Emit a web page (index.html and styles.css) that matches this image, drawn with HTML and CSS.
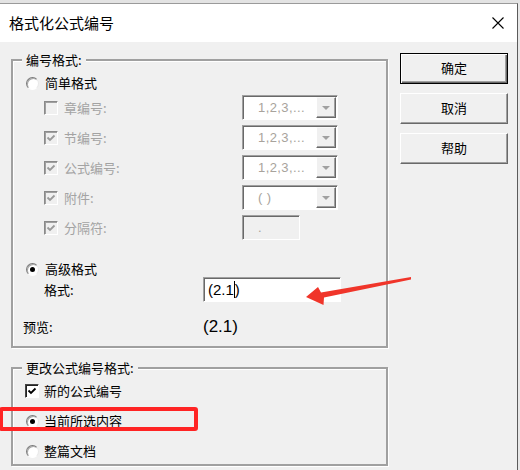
FILE: index.html
```html
<!DOCTYPE html>
<html lang="zh-CN">
<head>
<meta charset="utf-8">
<title>格式化公式编号</title>
<link rel="stylesheet" href="styles.css">
</head>
<body>
<div class="screen">
  <div class="chrome-top"></div>
  <div class="window">
    <div class="titlebar">
      <span class="title">格式化公式编号</span>
      <svg class="close" width="12" height="12" viewBox="0 0 12 12"><path d="M0.5 0.5L11.5 11.5M11.5 0.5L0.5 11.5" stroke="#000" stroke-width="1.1" fill="none"/></svg>
    </div>
    <div class="content">
      <div class="groups">
        <div class="group g1">
          <span class="legend">编号格式:</span>
          <div class="row r-simple"><span class="radio"></span><span>简单格式</span></div>
          <div class="opts">
            <div class="opt"><span class="cb"></span><span class="lbl">章编号:</span><div class="combo"><span class="ctext">1,2,3,...</span><span class="dd"><i class="tri"></i></span></div></div>
            <div class="opt"><span class="cb"><svg width="12" height="12" viewBox="0 0 12 12"><path d="M2.5 5.5L5 8L9.5 3.5" stroke="#9a9a9a" stroke-width="1.8" fill="none"/></svg></span><span class="lbl">节编号:</span><div class="combo"><span class="ctext">1,2,3,...</span><span class="dd"><i class="tri"></i></span></div></div>
            <div class="opt"><span class="cb"><svg width="12" height="12" viewBox="0 0 12 12"><path d="M2.5 5.5L5 8L9.5 3.5" stroke="#9a9a9a" stroke-width="1.8" fill="none"/></svg></span><span class="lbl">公式编号:</span><div class="combo"><span class="ctext">1,2,3,...</span><span class="dd"><i class="tri"></i></span></div></div>
            <div class="opt"><span class="cb"><svg width="12" height="12" viewBox="0 0 12 12"><path d="M2.5 5.5L5 8L9.5 3.5" stroke="#9a9a9a" stroke-width="1.8" fill="none"/></svg></span><span class="lbl">附件:</span><div class="combo"><span class="ctext">( )</span><span class="dd"><i class="tri"></i></span></div></div>
            <div class="opt"><span class="cb"><svg width="12" height="12" viewBox="0 0 12 12"><path d="M2.5 5.5L5 8L9.5 3.5" stroke="#9a9a9a" stroke-width="1.8" fill="none"/></svg></span><span class="lbl">分隔符:</span><div class="sepbox"><span class="ctext">.</span></div></div>
          </div>
          <div class="row adv"><span class="radio checked"></span><span>高级格式</span></div>
          <div class="row fmt"><span class="flbl">格式:</span><div class="input"><span class="itext">(2.1</span><span class="caret"></span><span class="itext">)</span></div></div>
          <div class="row preview"><span class="plbl">预览:</span><span class="pval">(2.1)</span></div>
        </div>
        <div class="group g2">
          <span class="legend">更改公式编号格式:</span>
          <div class="row r-cb"><span class="cb on"><svg width="12" height="12" viewBox="0 0 12 12"><path d="M2.5 5.5L5 8L9.5 3.5" stroke="#000" stroke-width="1.8" fill="none"/></svg></span><span>新的公式编号</span></div>
          <div class="row r-rd"><span class="radio checked"></span><span>当前所选内容</span></div>
          <div class="row r-rd"><span class="radio"></span><span>整篇文档</span></div>
        </div>
      </div>
      <div class="buttons">
        <div class="btn default">确定</div>
        <div class="btn">取消</div>
        <div class="btn">帮助</div>
      </div>
    </div>
  </div>
  <div class="highlight"></div>
  <svg class="arrow" width="520" height="470" viewBox="0 0 520 470"><polygon points="306,297 318,287 321,292.5 411,277 411,279.5 324,297.5 323.5,305" fill="#f0352a"/></svg>
</div>
</body>
</html>
```
FILE: styles.css
```css
body {
  margin: 0;
  background: #e8e8e8;
}
.screen {
  position: relative;
  width: 520px;
  height: 470px;
  overflow: hidden;
  background: #e8e8e8;
  font-family: "Noto Sans CJK SC", sans-serif;
  color: #000;
}
.chrome-top {
  height: 3px;
  background: #e3e3e3;
}
.window {
  width: 518px;
  height: 467px;
  box-sizing: border-box;
  border-top: 1px solid #9a9a9a;
  border-right: 1px solid #5b5b5b;
  background: #f0f0f0;
}
.titlebar {
  height: 38px;
  background: #fff;
  display: flex;
  align-items: center;
  justify-content: space-between;
  padding: 0 13px 0 9px;
}
.title {
  font-size: 15px;
  line-height: 20px;
}
.close {
  display: block;
}
.content {
  display: flex;
  gap: 12px;
  padding: 11px 0 0 11px;
}
.groups {
  width: 377px;
  margin-top: 6px;
  display: flex;
  flex-direction: column;
  gap: 19px;
}
.group {
  position: relative;
  box-sizing: border-box;
  border: 2px solid #a0a0a0;
  box-shadow: inset 1px 1px #fff, 1px 1px #fff;
}
.legend {
  position: absolute;
  top: -10px;
  left: 9px;
  padding: 0 4px;
  background: #f0f0f0;
  font-size: 13px;
  line-height: 18px;
}
.g1 {
  height: 289px;
  padding-top: 12px;
}
.g2 {
  height: 99px;
  padding-top: 12px;
  display: flex;
  flex-direction: column;
  gap: 10px;
}
.row {
  display: flex;
  align-items: center;
  height: 20px;
  font-size: 13px;
  line-height: 20px;
}
.r-simple {
  padding-left: 13px;
  gap: 6px;
  margin-bottom: 2px;
}
.radio {
  width: 13px;
  height: 13px;
  box-sizing: border-box;
  border-radius: 50%;
  background: #fff;
  border: 1px solid;
  border-color: #7a7a7a #e8e8e8 #fff #7a7a7a;
  box-shadow: inset 1px 1px #a8a8a8;
  display: flex;
  align-items: center;
  justify-content: center;
  flex: none;
}
.radio.checked::after {
  content: "";
  width: 5px;
  height: 5px;
  border-radius: 50%;
  background: #000;
}
.opts {
  display: flex;
  flex-direction: column;
  gap: 5px;
  padding-left: 31px;
  color: #a3a3a3;
  font-size: 13px;
}
.opt {
  display: flex;
  align-items: center;
  height: 25px;
}
.cb {
  width: 14px;
  height: 14px;
  box-sizing: border-box;
  background: #f0f0f0;
  border: 1px solid;
  border-color: #8a8a8a #fff #fff #8a8a8a;
  box-shadow: inset 1px 1px #a0a0a0;
  display: flex;
  align-items: center;
  justify-content: center;
  flex: none;
  margin-right: 6px;
}
.cb svg {
  display: block;
}
.cb.on {
  background: #fff;
  border-color: #444 #fff #fff #444;
  box-shadow: inset 1px 1px #222;
  margin-right: 5px;
}
.lbl {
  width: 178px;
  flex: none;
  line-height: 20px;
}
.combo,
.sepbox,
.input {
  height: 25px;
  box-sizing: border-box;
  border: 1px solid;
  border-color: #a0a0a0 #fff #fff #a0a0a0;
  box-shadow: inset 1px 1px #696969;
  display: flex;
  align-items: center;
  flex: none;
}
.combo {
  width: 96px;
  background: #fff;
  justify-content: space-between;
  padding-left: 15px;
}
.sepbox {
  width: 58px;
  background: #f0f0f0;
  padding-left: 15px;
}
.ctext {
  font-family: "Liberation Sans", sans-serif;
  font-size: 13px;
  letter-spacing: 0.4px;
  color: #a8a39c;
}
.dd {
  width: 20px;
  height: 21px;
  box-sizing: border-box;
  margin-right: 1px;
  background: #f0f0f0;
  border: 1px solid;
  border-color: #f8f8f8 #696969 #696969 #fff;
  box-shadow: inset -1px -1px #a0a0a0;
  display: flex;
  align-items: center;
  justify-content: center;
}
.tri {
  width: 0;
  height: 0;
  border-left: 4px solid transparent;
  border-right: 4px solid transparent;
  border-top: 4px solid #a0a0a0;
}
.adv {
  margin-top: 21px;
  height: 16px;
  padding-left: 13px;
  gap: 6px;
}
.fmt {
  height: 25px;
  padding-left: 31px;
}
.flbl {
  width: 159px;
  flex: none;
}
.input {
  width: 138px;
  background: #fff;
  padding-left: 4px;
}
.itext {
  font-family: "Liberation Sans", sans-serif;
  font-size: 15px;
  line-height: 20px;
}
.caret {
  width: 1px;
  height: 17px;
  background: #000;
}
.preview {
  margin-top: 15px;
  padding-left: 10px;
}
.plbl {
  width: 180px;
  flex: none;
}
.pval {
  font-family: "Liberation Sans", sans-serif;
  font-size: 17px;
}
.r-cb {
  padding-left: 12px;
}
.r-rd {
  padding-left: 13px;
  gap: 5px;
}
.buttons {
  display: flex;
  flex-direction: column;
  gap: 9px;
}
.btn {
  width: 108px;
  height: 31px;
  box-sizing: border-box;
  border: 1px solid;
  border-color: #fff #696969 #696969 #fff;
  box-shadow: inset -1px -1px #a0a0a0;
  background: #f0f0f0;
  font-size: 13px;
  line-height: 28px;
  text-align: center;
}
.btn.default {
  border: 1px solid #000;
  box-shadow: inset 1px 1px #fff, inset -1px -1px #696969, inset -2px -2px #a0a0a0;
}
.highlight {
  position: absolute;
  left: -1px;
  top: 407px;
  width: 199px;
  height: 24px;
  box-sizing: border-box;
  border: 4px solid #ff2424;
  border-radius: 3px;
}
.arrow {
  position: absolute;
  left: 0;
  top: 0;
  pointer-events: none;
}
```
